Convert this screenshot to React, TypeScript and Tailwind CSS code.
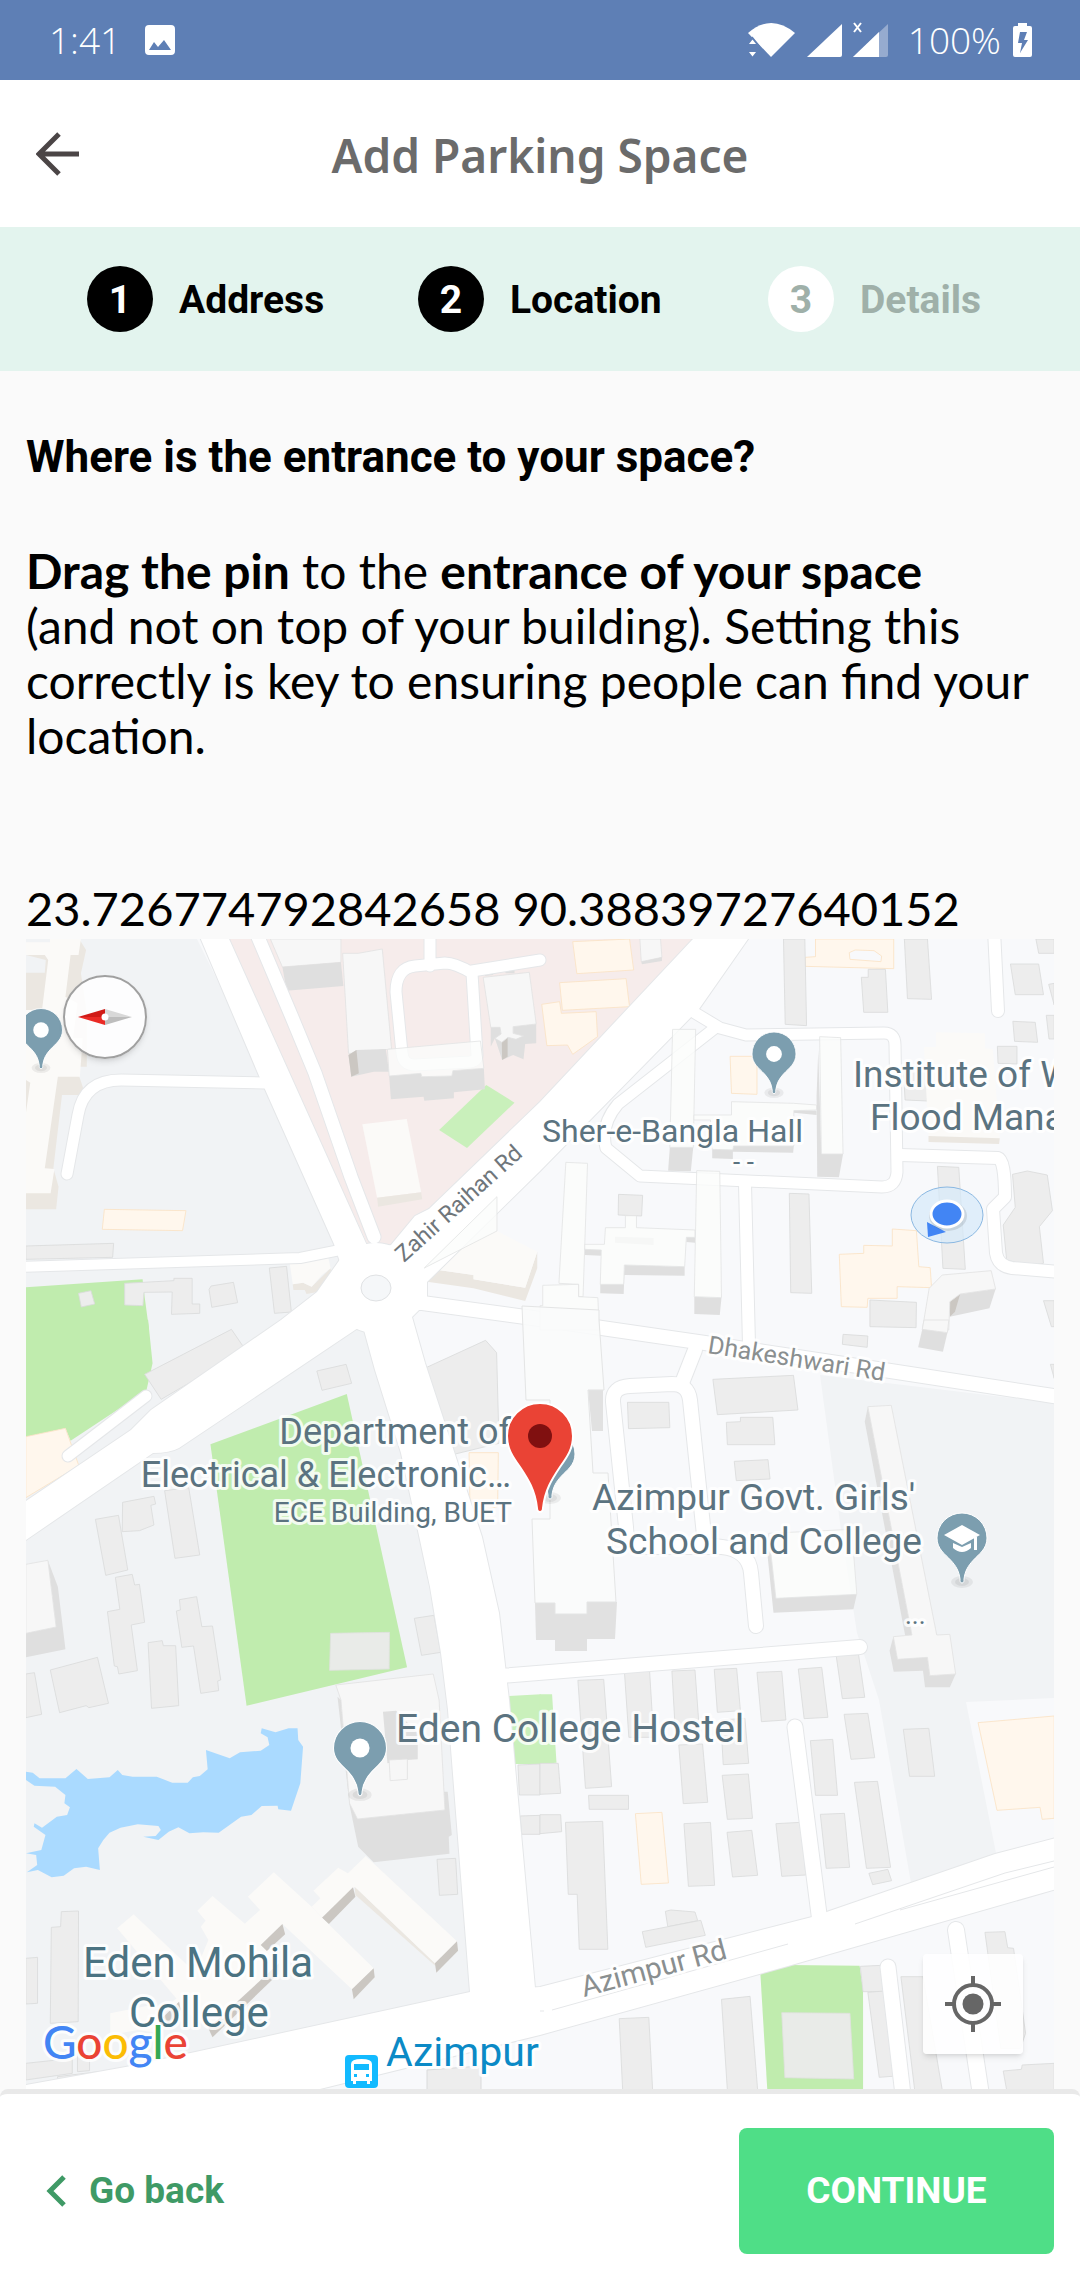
import type { ReactNode } from "react";

type Shade = "flat" | "shop" | "park" | "lawn" | "roof" | "cream" | "wall" | "dark" | "beige" | "glass" | "water" | "yard" | "ground";

const SHADES: Record<Shade, string> = {
  flat: "fill-[#ededed] stroke-[#dadbdc]",
  shop: "fill-[#fff7ed] stroke-[#fae2c5]",
  park: "fill-[#c0ecae]",
  lawn: "fill-[#c9f0bb]",
  roof: "fill-[#f7f7f7] stroke-[#e2e2e2]",
  cream: "fill-[#fbfaf8]",
  wall: "fill-[#dfdfdf]",
  dark: "fill-[#cbc7c2]",
  beige: "fill-[#ebe7e1]",
  glass: "fill-[#fbfcfb]/80 stroke-[#e4e5e5]",
  water: "fill-[#aadaff]",
  yard: "fill-[#e9ebe8] stroke-[#dfe1de]",
  ground: "fill-[#f8f9fb] stroke-[#fae2c5]",
};

type Shape = [Shade, string];
interface Tile { x: number; y: number; shapes: Shape[] }

const flats = (list: string[]): Shape[] => list.map((p) => ["flat", p]);

/* Each tile covers 540 by 400 map units, drawn on a 1568 by 1200 grid. */
const TILES: Tile[] = [
  {
    x: 0, y: 930,
    shapes: [
      ["park", "75,1072 414,1048 420,1100 433,1201 75,1201"],
      ["park", "75,138 132,138 120,240 75,240"],
      ["lawn", "1412,465 1494,518 1356,654 1275,600"],
      ...flats([
        "75,948 330,940 327,982 75,988",
        "362,1060 505,1052 505,1045 558,1045 558,1122 580,1122 580,1150 498,1153 500,1086 418,1087 415,1127 362,1125",
        "607,1078 613,1068 678,1057 690,1118 615,1132",
        "782,1014 832,1009 846,1146 797,1150",
        "228,1090 264,1082 275,1122 236,1131",
      ]),
      ["shop", "303,838 540,842 530,902 297,898"],
      ["beige", "230,27 250,60 235,130 252,250 252,410 215,410 232,445 248,495 180,495 155,715 170,770 163,838 75,838 75,128 130,128 133,90 75,75"],
      ["cream", "75,37 145,37 145,27 235,27 228,75 205,75 190,200 225,220 212,325 240,325 232,440 168,440 130,715 158,717 147,790 75,790 75,550 88,458 75,450 75,240 122,240 140,90 130,75 75,75"],
      ["roof", "785,27 990,27 990,97 820,111"],
      ["wall", "820,111 990,97 997,168 832,182"],
      ["roof", "995,70 1040,70 1110,57 1137,357 1020,370 1012,370"],
      ["wall", "1012,375 1035,360 1120,357 1130,425 1085,425 1020,440"],
      ["dark", "1012,375 1035,360 1042,430 1020,440"],
      ["wall", "1130,438 1222,430 1225,440 1312,438 1315,422 1405,415 1408,478 1318,487 1318,505 1232,512 1230,500 1135,508"],
      ["glass", "1125,358 1395,333 1405,415 1315,422 1312,438 1225,440 1222,430 1130,438"],
      ["wall", "1425,292 1557,282 1557,340 1525,342 1520,388 1490,375 1458,390 1437,325 1425,350"],
      ["dark", "1457,337 1474,322 1474,380 1458,390"],
      ["roof", "1403,142 1537,127 1557,282 1490,290 1490,310 1520,318 1498,328 1475,322 1457,337 1437,325 1455,312 1452,292 1425,292"],
      ["wall", "1408,105 1420,95 1448,108 1480,88 1494,105 1494,130 1468,130 1465,115 1432,120 1432,135 1408,138"],
      ["cream", "1052,583 1181,567 1223,787 1095,803"],
      ["beige", "1095,803 1223,787 1226,808 1098,830"],
      ["beige", "1232,1014 1375,1035 1375,1048 1525,1073 1560,965 1560,1015 1525,1113 1375,1075 1240,1055"],
      ["cream", "1443,903 1560,965 1525,1073 1375,1048 1375,1035 1232,1014 1340,905"],
      ["glass", "1443,800 1443,903 1232,1014"],
      ["beige", "850,1063 880,1058 905,1070 960,1015 962,1035 925,1085 890,1092 885,1080 852,1080"],
      ["cream", "838,975 950,967 960,1015 935,1035 905,1070 880,1058 850,1063"],
    ],
  },
  {
    x: 540, y: 930,
    shapes: [
      ["shop", "95,35 260,27 272,120 107,131"],
      ["shop", "5,223 57,215 62,250 163,245 167,320 95,373 80,345 20,347"],
      ["shop", "57,158 250,146 260,230 65,241"],
      ["shop", "800,27 1027,27 1027,116 770,109 770,82 800,80"],
      ["ground", "898,68 915,60 970,62 992,78 990,95 900,88"],
      ["shop", "552,379 630,379 630,493 556,490"],
      ["shop", "1023,897 1093,902 1100,1010 1133,1013 1137,1073 1037,1070 1037,1105 952,1105 950,1132 875,1130 869,973 940,970 940,946 1023,948"],
      ...flats([
        "707,27 769,27 774,287 712,283",
        "953,118 1003,118 1010,247 940,247 933,142 953,142",
        "1058,27 1125,27 1137,208 1067,206",
        "1440,27 1493,27 1493,70 1448,70",
        "1366,102 1448,102 1462,194 1380,194",
        "1477,163 1493,160 1493,225",
        "1373,274 1438,277 1445,337 1378,334",
        "1470,256 1493,256 1493,327 1478,327",
        "1328,349 1385,349 1385,402 1330,400",
        "1055,410 1125,410 1125,513 1060,510",
        "1154,709 1216,712 1235,1018 1170,1015",
        "724,790 781,792 789,1090 728,1088",
        "1372,733 1415,723 1473,735 1488,842 1450,890 1462,1000 1420,1008 1355,990 1345,885 1380,832",
        "228,793 298,796 295,858 227,855",
        "958,1110 1093,1117 1092,1193 958,1190",
        "1462,1112 1493,1112 1493,1190 1485,1190",
      ]),
      ["roof", "290,27 350,27 354,82 294,95"],
      ["wall", "294,95 354,82 354,93 296,103"],
      ["wall", "377,652 445,652 438,724 372,722"],
      ["glass", "385,298 452,298 445,652 377,652"],
      ["wall", "817,672 880,672 868,742 805,740 803,500 808,360"],
      ["glass", "812,320 873,323 880,672 817,672"],
      ["wall", "500,658 560,658 562,648 737,648 735,668 560,665 560,687 500,685"],
      ["wall", "737,540 803,542 803,555 737,548"],
      ["glass", "447,555 556,555 556,515 737,520 803,525 803,540 737,542 737,648 562,648 560,660 500,658 495,570 447,570"],
      ["cream", "1150,307 1292,310 1292,355 1315,358 1335,625 1128,618 1115,352 1150,352"],
      ["beige", "1128,618 1335,625 1333,642 1128,636"],
      ["glass", "75,697 138,700 125,1100 112,1100 112,1063 55,1060"],
      ["wall", "448,1100 527,1103 522,1155 448,1152"],
      ["glass", "455,722 522,724 527,1103 448,1100"],
      ["wall", "175,1063 243,1063 245,1005 420,1010 420,1037 245,1035 243,1092 175,1090"],
      ["wall", "130,958 178,960 178,977 130,975"],
      ["wall", "425,920 450,922 450,938 425,936"],
      ["glass", "248,857 280,857 280,893 450,900 450,922 425,922 420,1010 245,1005 243,1063 175,1063 178,960 130,958 130,943 187,943 190,893 248,893"],
      ["wall", "218,920 330,924 330,945 218,938"],
      ["wall", "1190,1115 1220,1092 1323,1077 1305,1135 1190,1160"],
      ["dark", "1190,1115 1220,1092 1205,1145 1190,1160"],
      ["roof", "1168,1035 1310,1022 1323,1077 1220,1092 1190,1115 1187,1200 1110,1200 1130,1075"],
      ["glass", "8,1066 112,1063 112,1100 168,1103 172,1200 0,1200 0,1127 8,1127"],
    ],
  },
  {
    x: 0, y: 1320,
    shapes: [
      ["park", "75,-1 430,-1 443,130 425,212 205,362 190,325 75,350"],
      ["park", "611,373 1007,222 1182,1042 716,1157"],
      ["yard", "960,940 1131,937 1130,1047 957,1051"],
      ["shop", "75,350 190,325 229,437 75,533"],
      ["shop", "1362,398 1447,398 1445,560 1365,580"],
      ...flats([
        "420,163 672,28 713,90 468,238",
        "920,153 1005,133 1021,190 935,211",
        "1237,143 1410,61 1442,98 1449,370 1318,403",
        "356,547 447,529 452,552 438,556 447,615 405,632 355,635",
        "277,598 344,586 371,750 307,766",
        "478,512 548,503 580,705 508,715",
        "335,772 384,763 391,795 405,793 420,907 381,915 399,1052 345,1062 341,1040 332,1038 312,875 348,868",
        "521,839 571,830 586,920 617,918 641,1080 632,1083 635,1112 583,1120 562,978 528,982 512,873 524,870",
        "430,968 471,962 474,977 510,977 519,1157 440,1165",
        "75,1062 100,1058 121,1183 75,1193",
        "146,1050 283,1012 315,1150 258,1163 250,1157 173,1178",
        "1203,895 1260,886 1280,997 1224,1006",
      ]),
      ["wall", "139,721 168,800 190,988 75,1012 75,940 163,921"],
      ["roof", "75,733 139,721 163,921 75,940"],
    ],
  },
  {
    x: 540, y: 1320,
    shapes: [
      ...flats([
        "880,43 952,48 950,82 878,73",
        "502,178 736,166 749,270 515,284",
        "254,247 374,247 377,323 257,326",
        "541,307 582,305 582,292 676,292 682,374 544,374",
        "564,424 662,419 668,477 570,482",
        "1482,133 1493,133 1493,175",
        "860,1007 925,1004 943,1132 878,1136",
      ]),
      ["wall", "1110,28 1183,38 1170,95 1098,82"],
      ["roof", "1115,0 1187,0 1183,38 1110,28"],
      ["wall", "952,260 943,305 1060,945 1080,945"],
      ["wall", "1026,950 1015,992 1027,1055 1112,1052 1118,1102 1190,1102 1207,1062 1132,1067 1125,1012 1038,1018"],
      ["roof", "952,260 1020,256 1152,945 1190,943 1207,1062 1132,1067 1125,1012 1038,1018 1026,950 1080,945"],
      ["wall", "660,700 664,640 685,835 920,823 910,868 678,878"],
      ["glass", "664,640 905,628 920,823 685,835"],
    ],
  },
  {
    x: 0, y: 1700,
    shapes: [
      ["lawn", "1478,-12 1570,-17 1570,192 1495,192"],
      ["water", "75,215 95,218 115,235 190,235 222,207 255,237 318,232 342,210 355,225 385,230 455,230 500,248 545,248 560,232 580,228 603,208 598,150 667,175 697,157 757,152 782,135 777,112 757,100 760,85 800,97 838,85 864,85 866,120 880,140 872,250 845,332 808,328 806,317 760,318 730,345 700,350 635,398 590,397 550,400 518,382 490,395 460,420 416,410 452,408 467,390 460,378 400,373 350,383 318,398 300,420 285,445 290,510 250,500 215,505 185,527 150,532 110,510 78,517 108,495 105,465 75,460 120,450 132,405 98,380 100,370 122,383 165,350 195,345 203,322 187,310 190,285 160,260 100,257 75,240"],
      ...flats([
        "1504,195 1568,192 1568,285 1508,285",
        "1510,348 1568,346 1568,403 1515,403",
        "1269,478 1323,475 1329,583 1276,586",
        "178,635 228,633 227,965 146,970 149,682 176,680",
        "75,775 109,772 109,910 75,912",
        "75,1090 210,1075 210,1120 75,1140",
        "225,1060 260,1060 260,1112 225,1115",
        "167,1130 286,1115 286,1143 168,1157",
      ]),
      ["wall", "980,-10 990,0 1015,310 1038,357 1292,330 1285,275 1300,275 1312,405 1303,410 1305,461 1085,487 1040,440 1015,315"],
      ["roof", "975,-45 1258,-78 1275,0 1292,330 1038,357 1015,310 990,0"],
      ["wall", "1112,35 1150,32 1213,100 1213,178 1180,180 1125,190"],
      ["roof", "1130,180 1183,177 1183,238 1133,242"],
      ["beige", "1030,560 1263,790 1267,800 1032,585"],
      ["cream", "1062,468 1327,724 1263,790 1030,560 935,653 905,620 930,595 910,572 982,503 1010,520"],
      ["dark", "1263,790 1327,724 1330,752 1267,818"],
      ["dark", "935,653 1025,562 1032,590 955,672"],
      ["cream", "388,643 590,840 520,905 340,685"],
      ["cream", "617,588 712,672 790,720 810,790 605,985 500,905 545,870 605,720 583,680 597,662 573,632"],
      ["cream", "795,517 905,620 935,653 1085,805 1022,868 820,672 757,735 710,672 755,630 720,590"],
      ["dark", "1022,868 1085,805 1088,832 1027,898"],
      ["dark", "757,735 820,672 828,703 775,753"],
      ["dark", "605,985 810,790 808,822 617,1012"],
      ["dark", "470,955 520,905 525,930 490,970"],
      ["cream", "320,940 440,915 480,960 470,1000 400,990 320,1005"],
    ],
  },
  {
    x: 540, y: 1700,
    shapes: [
      ["lawn", "-1,-17 35,-17 48,188 -1,192"],
      ["park", "640,823 720,795 928,797 938,870 938,1170 660,1170"],
      ["yard", "702,938 900,940 911,1137 711,1133"],
      ["shop", "277,341 354,337 373,549 294,553"],
      ["shop", "1272,68 1493,48 1493,355 1458,358 1452,322 1327,331"],
      ...flats([
        "0,190 53,190 60,280 0,283",
        "0,344 60,344 63,395 0,401",
        "110,-59 185,-62 208,260 132,265",
        "245,-87 318,-90 330,112 258,112",
        "383,-87 450,-90 463,95 393,95",
        "506,-92 571,-95 582,32 515,37",
        "630,-83 702,-86 714,60 643,65",
        "750,-93 818,-98 836,52 767,56",
        "883,43 952,40 972,173 903,178",
        "403,135 472,132 487,307 416,311",
        "529,226 605,222 617,355 544,358",
        "525,60 595,55 606,190 532,194",
        "543,397 615,391 632,526 559,531",
        "418,371 495,367 507,556 431,559",
        "141,286 257,286 257,328 143,328",
        "74,367 182,364 197,748 114,748 108,583 82,583",
        "364,634 380,630 450,636 458,662 371,680",
        "297,695 467,661 480,706 307,742",
        "685,371 757,367 772,525 702,529",
        "785,122 850,118 864,286 800,286",
        "814,343 884,340 899,502 831,505",
        "913,247 980,244 1018,502 948,505",
        "955,520 1010,508 1021,542 966,554",
        "1055,88 1129,85 1146,229 1073,229",
        "230,956 316,952 327,1170 240,1170",
        "527,898 610,889 632,1170 544,1170",
        "930,799 992,796 1000,875 938,875",
        "952,877 1000,873 1035,1128 985,1132",
        "1048,830 1112,830 1168,1170 1088,1170",
        "1292,697 1350,695 1358,743 1375,745 1410,1000 1395,1045 1338,1045",
        "1345,1113 1398,1108 1400,1095 1493,1090 1493,1170 1355,1170",
      ]),
    ],
  },
];

const AVENUES = [
  "M197 930H225L369 1250L340 1262L334 1244L260 1078Z",
  "M369 1250L391 1245L415 1216L429 1209L540 1102L693 939L700 930H755L748 939L699 1009L540 1171L427 1282V1310H360Z",
  "M341 1258L317 1292L281 1320L151 1410L131 1430L20 1505V1544L153 1453Q170 1453 179 1448L358 1328L400 1300Z",
  "M364 1330L375 1370L401 1453L420 1540L430 1587L441 1653L448 1710L470 1992L500 2020L535 1988L509 1700L499 1613L482 1537L425 1363L412 1317L422 1307L400 1290H364Z",
  "M20 2086L131 2066L470 1992L540 1987L812 1917L995 1854L1060 1837V1888L788 1966L540 2035L320 2089L310 2095H20Z",
  "M376 1243A45 45 0 1 1 375 1243Z",
];

const STREETS: [string, number][] = [
  ["M255 930L291 1015L315 1073L351 1177L374 1237", 13],
  ["M20 1267L300 1258L345 1249", 10],
  ["M67 1174L78 1115Q84 1080 121 1080L265 1083", 11],
  ["M430 930V966M540 960L472 971M472 973L477 1055Q477 1061 470 1062L415 1065Q403 1065 402 1053L396 992Q396 968 415 966L445 963Q455 963 472 973", 11],
  ["M695 1013L720 1028L746 1035L884 1033Q895 1033 895 1045L897 1172Q896 1187 882 1187L640 1176L606 1148Q600 1125 618 1104L715 1028", 11],
  ["M745 1184L749 1345", 12],
  ["M900 1155L998 1158Q1005 1160 1005 1197L993 1209L996 1253Q998 1266 1012 1268L1060 1272", 12],
  ["M994 930L998 1011", 12],
  ["M415 1302L540 1319L705 1343L884 1370L1060 1397", 14],
  ["M695 1350L682 1383", 14],
  ["M722 1547H640Q626 1545 626 1527L613 1402Q612 1387 630 1386L672 1384Q688 1384 690 1400L705 1545M705 1545L722 1547Q749 1550 751 1573L756 1626", 14],
  ["M500 1676L860 1647", 14],
  ["M795 1727L820 1922", 15],
  ["M888 1967L903 2095", 15],
  ["M956 1930L981 2095", 16],
  ["M146 1396L68 1456", 11],
];

const HALO = "stroke-white/80 stroke-[6px] [paint-order:stroke] [stroke-linejoin:round]";

function Label({ x, y, size, tone = "fill-[#5b7380]", angle = 0, end = false, children }: {
  x: number; y: number; size: string; tone?: string; angle?: number; end?: boolean; children: ReactNode;
}) {
  return (
    <text x={x} y={y} textAnchor={end ? "end" : "start"} transform={`rotate(${angle} ${x} ${y})`} className={`${HALO} ${size} ${tone}`}>
      {children}
    </text>
  );
}

function PlacePin({ x, y, scale = 1, children }: { x: number; y: number; scale?: number; children?: ReactNode }) {
  return (
    <g transform={`translate(${x} ${y}) scale(${scale})`}>
      <ellipse cy="44" rx="11" ry="6" className="fill-black/6" />
      <ellipse cy="44" rx="7" ry="4" className="fill-black/6" />
      <path d="M0 45C-2 45-2 43-2 41C-3 33-6 28-11 22.5C-17 16-25 11-25 0A25 25 0 1 1 25 0C25 11 17 16 11 22.5C6 28 3 33 2 41C2 43 2 45 0 45Z" className="fill-[#7c9eaf] stroke-white stroke-1" />
      {children ?? <circle r="9" className="fill-white" />}
    </g>
  );
}

function MapCanvas() {
  return (
    <svg viewBox="26 939 1028 1150" role="img" aria-label="Map of Azimpur" className="block h-auto w-full bg-[#f8f9fb] font-['Roboto',sans-serif]">
      <path d="M26 939H197L375 1300L450 1700L470 1992L26 2089Z" className="fill-[#f1f3f5]" />
      <path d="M225 939H693L540 1102L400 1245H368Z" className="fill-[#f6eceb]" />
      <path d="M820 1375L1054 1403V1698L966 1702L996 1853L911 1883L879 1700L857 1633L841 1530Z" className="fill-[#f1f3f5]" />
      {TILES.map((tile) => (
        <g key={`${tile.x}-${tile.y}`} transform={`translate(${tile.x} ${tile.y}) scale(0.34439 0.33333)`} className="stroke-[2.5px]">
          {tile.shapes.filter(([s]) => s !== "glass").map(([shade, points]) => <polygon key={points} points={points} className={SHADES[shade]} />)}
        </g>
      ))}
      <g className="fill-[#e5e7e9] stroke-[#e5e7e9] stroke-2">
        {AVENUES.map((d) => <path key={d} d={d} />)}
      </g>
      <g fill="none" strokeLinecap="round" strokeLinejoin="round" className="stroke-[#e5e7e9]">
        {STREETS.map(([d, w]) => <path key={d} d={d} strokeWidth={w + 2} />)}
      </g>
      <g className="fill-white">{AVENUES.map((d) => <path key={d} d={d} />)}</g>
      <g fill="none" strokeLinecap="round" strokeLinejoin="round" className="stroke-white">
        {STREETS.map(([d, w]) => <path key={d} d={d} strokeWidth={w} />)}
      </g>
      <path d="M552 2010L788 1944M540 2011H544M855 1924L1005 1873L1054 1861M900 1910L1054 1867" fill="none" className="stroke-[#e5e7e9]" />
      <path d="M427 2070L481 2066V2090H427Z" className="fill-[#ededed] stroke-[#dadbdc]" />
      <ellipse cx="376" cy="1288" rx="15" ry="13" className="fill-[#f5f7f9] stroke-[#e0e2e4]" />
      {TILES.map((tile) => (
        <g key={`${tile.x}-${tile.y}-top`} transform={`translate(${tile.x} ${tile.y}) scale(0.34439 0.33333)`} className="stroke-[2.5px]">
          {tile.shapes.filter(([s]) => s === "glass").map(([shade, points]) => <polygon key={points} points={points} className={SHADES[shade]} />)}
        </g>
      ))}
      <path d="M588 1389H603V1431H592ZM535 1603H555V1614H587V1602H617L615 1639H587V1651H555V1640H536Z" className="fill-[#e1e1e1]" />
      <path d="M522 1306L599 1310V1320L604 1390H588L593 1473H608L616 1602H587V1614H555V1603H535L532 1519H550V1400H526Z" className="fill-[#fafbfb]/90 stroke-[#e4e5e5]" />

      <ellipse cx="947" cy="1215" rx="36" ry="28" className="fill-[#d6e9fa]/70 stroke-[#8ab8e2]" />
      <path d="M927 1222L946 1232L928 1237Z" className="fill-[#4285f4]" />
      <ellipse cx="948" cy="1216" rx="19" ry="15" className="fill-black/10" />
      <ellipse cx="947" cy="1214" rx="16" ry="13" className="fill-[#4285f4] stroke-white stroke-3" />

      <PlacePin x={41} y={1030} scale={0.86} />
      <PlacePin x={774} y={1054} scale={0.88} />
      <PlacePin x={360} y={1748} scale={1.06} />
      <PlacePin x={962} y={1538}>
        <g className="fill-white">
          <path d="M-18-3L0-13L18-3L0 7Z" />
          <path d="M-9 5L0 9L9 5V10Q0 18-9 10Z" />
          <path d="M12-1H15V12H12Z" />
        </g>
      </PlacePin>
      <PlacePin x={550} y={1454} />

      <Label x={542} y={1142} size="text-[32px]">Sher-e-Bangla Hall</Label>
      <Label x={733} y={1171} size="text-[26px]">- -</Label>
      <Label x={853} y={1087} size="text-[37px]">Institute of W</Label>
      <Label x={870} y={1130} size="text-[37px]">Flood Mana</Label>
      <Label x={404} y={1263} size="text-[23px]" angle={-42} tone="fill-[#6f767b]">Zahir Raihan Rd</Label>
      <Label x={707} y={1353} size="text-[25px]" angle={9} tone="fill-[#8a8f90]">Dhakeshwari Rd</Label>
      <Label x={584} y={1997} size="text-[29px]" angle={-15} tone="fill-[#8a8f90]">Azimpur Rd</Label>
      <Label x={511} y={1444} size="text-[36px]" end>Department of</Label>
      <Label x={511} y={1487} size="text-[36px]" end>Electrical &amp; Electronic…</Label>
      <Label x={512} y={1522} size="text-[28px]" end>ECE Building, BUET</Label>
      <Label x={592} y={1510} size="text-[37px]">Azimpur Govt. Girls'</Label>
      <Label x={922} y={1554} size="text-[37px]" end>School and College</Label>
      <Label x={905} y={1624} size="text-[26px]">...</Label>
      <Label x={396} y={1742} size="text-[39px]">Eden College Hostel</Label>
      <Label x={83} y={1977} size="text-[42px]" tone="fill-[#4b7382]">Eden Mohila</Label>
      <Label x={129} y={2027} size="text-[42px]" tone="fill-[#4b7382]">College</Label>
      <Label x={386} y={2066} size="text-[41px]" tone="fill-[#0b8ac6]">Azimpur</Label>

      <g transform="translate(345 2055)">
        <rect width="33" height="33" rx="4" className="fill-[#12baff]" />
        <path d="M6 9Q6 4 16.500 4Q27 4 27 9V26H25V29H22V26H11V29H8V26H6Z" className="fill-white" />
        <path d="M9 9H24V15H9ZM9 19H12V22H9ZM21 19H24V22H21Z" className="fill-[#12baff]" />
      </g>

      <text x="43" y="2059" className={`${HALO} font-['Lato',sans-serif] text-[46px] font-medium`}>
        <tspan className="fill-[#4285f4]">G</tspan>
        <tspan className="fill-[#ea4335]">o</tspan>
        <tspan className="fill-[#fbbc05]">o</tspan>
        <tspan className="fill-[#4285f4]">g</tspan>
        <tspan className="fill-[#34a853]">l</tspan>
        <tspan className="fill-[#ea4335]">e</tspan>
      </text>

      <g transform="translate(540 1436)">
        <path d="M0 76C-2 76-3 74-3 72C-5 54-12 43-20 31C-28 20-33 12-33 0A33 33 0 1 1 33 0C33 12 28 20 20 31C12 43 5 54 3 72C3 74 2 76 0 76Z" className="fill-[#ea4335] stroke-white stroke-2" />
        <circle r="12" className="fill-[#801010]" />
      </g>
    </svg>
  );
}

function StatusBar() {
  return (
    <div className="flex h-20 items-center justify-between bg-[#5e7fb5] pr-12 pl-[49px] font-['Open_Sans',sans-serif] text-[37px] text-white">
      <div className="flex items-center gap-6 font-light">
        <span>1:41</span>
        <svg viewBox="0 0 30 30" className="size-[30px]" aria-hidden="true">
          <path fillRule="evenodd" className="fill-white" d="M4 0H26Q30 0 30 4V26Q30 30 26 30H4Q0 30 0 26V4Q0 0 4 0ZM4 25H26L19 15L13 22L9 17Z" />
        </svg>
      </div>
      <div className="flex items-center font-light">
        <svg viewBox="0 0 140 36" className="mr-5 h-9 w-[140px] fill-white" aria-hidden="true">
          <path d="M0 11Q23-9 47 11L23 35Z" />
          <path d="M-1 23L4.500 16L10 23ZM-1 29L4.500 36L10 29Z" className="stroke-[#5e7fb5] stroke-2" />
          <path d="M94 2V33Q94 35 92 35H59Z" />
          <path d="M140 2V33Q140 35 138 35H105Z" className="fill-white/35" />
          <path d="M131 10V35H105Z" />
          <path d="M106 1L113 10M113 1L106 10" className="stroke-white stroke-2" />
        </svg>
        <span>100%</span>
        <svg viewBox="0 0 19 34" className="ml-3 h-[34px] w-[19px]" aria-hidden="true">
          <path fillRule="evenodd" className="fill-white" d="M5 0H14V3H17Q19 3 19 5V32Q19 34 17 34H2Q0 34 0 32V5Q0 3 2 3H5ZM7 9L5 20H9L7 30L15 17H11L14 9Z" />
        </svg>
      </div>
    </div>
  );
}

const STEPS = [
  { n: 1, label: "Address", done: true },
  { n: 2, label: "Location", done: true },
  { n: 3, label: "Details", done: false },
];

export default function App() {
  return (
    <div className="flex min-h-screen flex-col bg-[#fafafa] font-['Roboto',sans-serif] text-black">
      <StatusBar />

      <header className="grid h-[147px] grid-cols-[1fr_auto_1fr] items-center bg-white px-9">
        <button type="button" aria-label="Back" className="justify-self-start">
          <svg viewBox="0 0 44 44" className="size-11 fill-none stroke-[#4b4546] stroke-5" aria-hidden="true">
            <path d="M43 22H4M23 2L3 22L23 42" />
          </svg>
        </button>
        <h1 className="pt-1 font-['Noto_Sans',sans-serif] text-[46px] font-semibold text-[#6b6b6b]">Add Parking Space</h1>
      </header>

      <ol className="grid h-36 grid-cols-[331fr_350fr_312fr] items-center bg-[#e3f4ee] pl-[87px]">
        {STEPS.map((s) => (
          <li key={s.n} className={s.done ? "flex items-center gap-[26px]" : "flex items-center gap-[26px] text-[#9fb0a9]"}>
            <span className={s.done
              ? "flex size-[66px] items-center justify-center rounded-full bg-black pt-0.5 text-[39px] font-bold text-white"
              : "flex size-[66px] items-center justify-center rounded-full bg-white pt-0.5 text-[39px] font-bold"}>{s.n}</span>
            <span className="pt-0.5 text-[39px] font-bold">{s.label}</span>
          </li>
        ))}
      </ol>

      <main className="px-[26px]">
        <h2 className="mt-[59px] text-[44px] leading-[55px] font-bold">Where is the entrance to your space?</h2>
        <p className="mt-[58px] font-['Lato',sans-serif] text-[48px] leading-[55px]">
          <b>Drag the pin</b> to the <b>entrance of your space</b><br />(and not on top of your building). Setting this correctly is key to ensuring people can find your location.
        </p>
        <p className="mt-[118px] font-['Lato',sans-serif] text-[47px] leading-[55px]">23.726774792842658 90.38839727640152</p>
        <div className="relative mt-[3px]">
          <MapCanvas />
          <button type="button" aria-label="Reset compass" className="absolute top-9 left-[37px] rounded-full bg-white/85 shadow-md">
            <svg viewBox="0 0 84 84" className="size-[84px]" aria-hidden="true">
              <circle cx="42" cy="42" r="41" className="fill-none stroke-[#a0a0a0] stroke-2" />
              <path d="M15 42L42 34V42Z" className="fill-[#d01b17]" />
              <path d="M15 42L42 50V42Z" className="fill-[#ea2a25]" />
              <path d="M69 42L42 34V42Z" className="fill-[#d8d8d8]" />
              <path d="M69 42L42 50V42Z" className="fill-[#bdbdbd]" />
              <circle cx="42" cy="42" r="3.500" className="fill-white" />
            </svg>
          </button>
          <button type="button" aria-label="My location" className="absolute right-[31px] bottom-[35px] flex size-[100px] items-center justify-center rounded-sm bg-white/90 shadow-md">
            <svg viewBox="0 0 56 56" className="size-14 fill-none stroke-[#666] stroke-4" aria-hidden="true">
              <circle cx="28" cy="28" r="19" />
              <circle cx="28" cy="28" r="10.500" className="fill-[#666] stroke-none" />
              <path d="M28 0V9M28 47V56M0 28H9M47 28H56" />
            </svg>
          </button>
        </div>
      </main>

      <footer className="flex flex-1 items-center justify-between rounded-t-lg border-t-5 border-[#e9e9e9] bg-white pt-2 pr-[26px] pl-[46px] text-[37px]">
        <button type="button" className="flex items-center gap-[23px] font-bold text-[#3f9a66]">
          <svg viewBox="0 0 20 32" className="h-8 w-5 fill-none stroke-current stroke-5" aria-hidden="true">
            <path d="M18 2L4 16L18 30" />
          </svg>
          Go back
        </button>
        <button type="button" className="h-[126px] w-[315px] rounded-lg bg-[#4fde87] font-bold text-white">CONTINUE</button>
      </footer>
    </div>
  );
}
